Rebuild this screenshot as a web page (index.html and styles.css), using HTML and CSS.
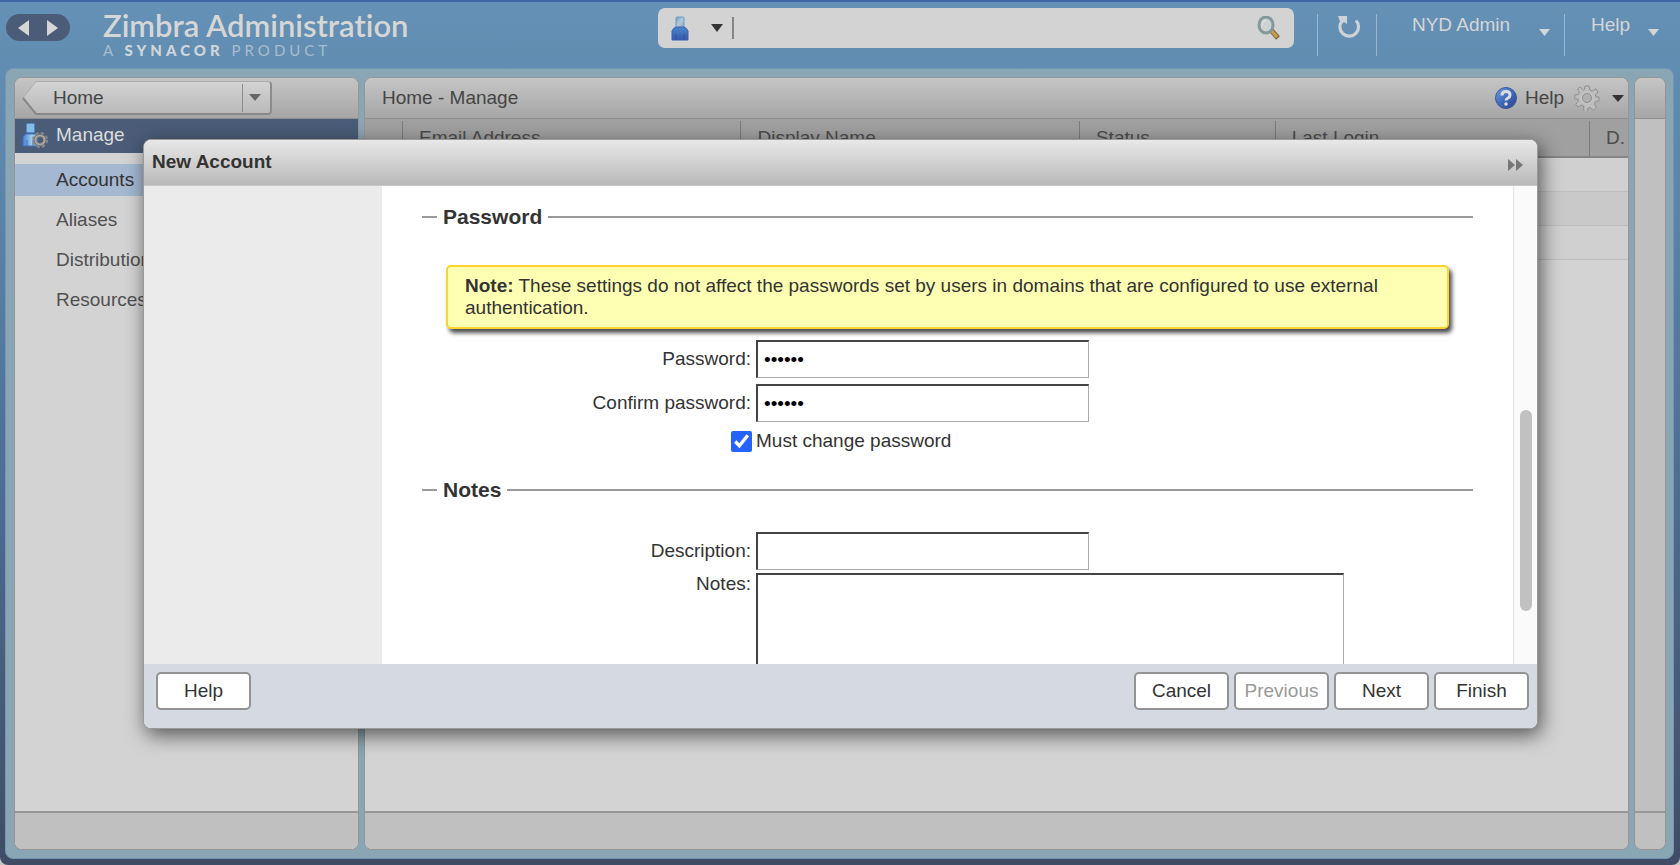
FILE: index.html
```html
<!DOCTYPE html>
<html lang="en">
<head>
<meta charset="utf-8">
<title>Zimbra Administration</title>
<link rel="stylesheet" href="styles.css">
</head>
<body>
<div class="app">
  <header class="topbar">
    <div class="history">
      <button class="bare" type="button" aria-label="Back"><svg width="11" height="16" viewBox="0 0 11 16"><path d="M11 0v16L0 8z" fill="#d6d6d6"/></svg></button>
      <button class="bare" type="button" aria-label="Forward"><svg width="11" height="16" viewBox="0 0 11 16"><path d="M0 0v16l11-8z" fill="#d6d6d6"/></svg></button>
    </div>
    <div class="brand">
      <span class="brand-name">Zimbra Administration</span>
      <span class="brand-sub">A <b>SYNACOR</b> PRODUCT</span>
    </div>
    <form class="search">
      <button class="bare search-type" type="button" aria-label="Search type">
        <svg width="18" height="25" viewBox="0 0 18 25">
          <defs>
            <linearGradient id="head" x1="0" y1="0" x2="1" y2="1"><stop offset="0" stop-color="#6f9fc8"/><stop offset=".5" stop-color="#b5c9d6"/><stop offset="1" stop-color="#7ba3c4"/></linearGradient>
            <linearGradient id="torso" x1="0" y1="0" x2="0" y2="1"><stop offset="0" stop-color="#4a86c8"/><stop offset="1" stop-color="#3858ac"/></linearGradient>
          </defs>
          <rect x="5" y="1" width="8" height="11" rx="1" fill="url(#head)" stroke="#6f9bc4"/>
          <path d="M1 24V15q1-3 4-4h8q3 1 4 4v9z" fill="url(#torso)" stroke="#3a62b0"/>
          <path d="M5 24v-6M13 24v-6" stroke="#34509c"/>
        </svg>
        <svg width="12" height="8" viewBox="0 0 12 8"><path d="M0 0h12L6 8z" fill="#333"/></svg>
      </button>
      <input class="search-input" type="text" aria-label="Search">
      <button class="bare" type="submit" aria-label="Search">
        <svg width="24" height="25" viewBox="0 0 24 25">
          <path d="M14 14l7 8" stroke="#8a6446" stroke-width="5"/>
          <path d="M14 14l6 7" stroke="#c9a04f" stroke-width="3"/>
          <ellipse cx="9" cy="9" rx="7" ry="8" fill="#cdd2d2" stroke="#829a9c" stroke-width="3"/>
          <path d="M5 10q0-5 4-6" fill="none" stroke="#e4e8e8" stroke-width="1"/>
        </svg>
      </button>
    </form>
    <div class="top-actions">
      <button class="bare refresh" type="button" aria-label="Refresh">
        <svg width="24" height="24" viewBox="0 0 24 24"><path d="M5 6A9.300 9.300 0 1 0 19 5.500" fill="none" stroke="#cdd2d6" stroke-width="3.200"/><path d="M1 1h9v8L7 7 4 9z" fill="#cdd2d6"/></svg>
      </button>
      <button class="bare user" type="button"><span>NYD Admin</span><svg width="11" height="7" viewBox="0 0 11 7"><path d="M0 0h11L5.500 7z" fill="#d6d6d6"/></svg></button>
      <button class="bare help-menu" type="button"><span>Help</span><svg width="11" height="7" viewBox="0 0 11 7"><path d="M0 0h11L5.500 7z" fill="#d6d6d6"/></svg></button>
    </div>
  </header>

  <div class="frame">
    <nav class="panel sidebar">
      <div class="panel-head">
        <div class="crumb">
          <svg class="crumb-tip" width="15" height="34" viewBox="0 0 15 34">
            <defs><linearGradient id="tip" x1="0" y1="0" x2="0" y2="1"><stop offset="0" stop-color="#d3d3d3"/><stop offset="1" stop-color="#bababa"/></linearGradient></defs>
            <path d="M15 .5h-1L1 17l13 16h1z" fill="url(#tip)"/><path d="M15 .5h-1L1 17" fill="none" stroke="#adadad"/><path d="M1 17l13 16h1" fill="none" stroke="#888" stroke-width="2"/>
          </svg>
          <div class="crumb-body">
            <button class="bare crumb-label" type="button">Home</button>
            <button class="bare crumb-menu" type="button" aria-label="History"><svg width="12" height="7" viewBox="0 0 12 7"><path d="M0 0h12L6 7z" fill="#666"/></svg></button>
          </div>
        </div>
      </div>
      <div class="section">
        <svg width="26" height="26" viewBox="0 0 26 26">
          <defs><linearGradient id="shirt" x1="0" y1="0" x2="1" y2="0"><stop offset="0" stop-color="#4a80d0"/><stop offset=".6" stop-color="#a5d2ec"/><stop offset="1" stop-color="#6fa6dc"/></linearGradient></defs>
          <rect x="4.500" y="1.500" width="8" height="9" rx="1" fill="#86bde6" stroke="#4f86d0"/>
          <path d="M1 24V15q1-2 3-3h9q2 1 3 3v9z" fill="url(#shirt)" stroke="#3e70c4"/>
          <path d="M5 24v-6M11 24v-6" stroke="#3e70c4"/>
          <circle cx="18" cy="18" r="6.500" fill="none" stroke="#8c8c8c" stroke-width="3" stroke-dasharray="2.900 2.205"/>
          <circle cx="18" cy="18" r="4.500" fill="none" stroke="#6d6d6d" stroke-width="3.800"/>
          <circle cx="18" cy="18" r="4.500" fill="none" stroke="#a6a6a6" stroke-width="2.200"/>
          <circle cx="18" cy="18" r="2.500" fill="#4a5c78"/>
        </svg>
        <span>Manage</span>
      </div>
      <div class="links">
        <a class="link active" href="#accounts">Accounts</a>
        <a class="link" href="#aliases">Aliases</a>
        <a class="link" href="#lists">Distribution Lists</a>
        <a class="link" href="#resources">Resources</a>
      </div>
      <div class="panel-foot"></div>
    </nav>

    <main class="panel content">
      <div class="panel-head">
        <span class="path">Home - Manage</span>
        <button class="bare head-help" type="button">
          <svg width="24" height="24" viewBox="0 0 24 24">
            <defs><linearGradient id="orb" x1="0" y1="0" x2="1" y2="1"><stop offset="0" stop-color="#6da0dc"/><stop offset=".5" stop-color="#3f6cba"/><stop offset="1" stop-color="#2c3e8c"/></linearGradient></defs>
            <circle cx="12" cy="12" r="10.500" fill="url(#orb)" stroke="#41569a"/>
            <path d="M8 9.500q0-4 4-4t4 3.500q0 2-2 3t-2 2.500" fill="none" stroke="#ddd" stroke-width="3"/><circle cx="12" cy="18" r="1.800" fill="#ddd"/>
          </svg>
          <span>Help</span>
        </button>
        <button class="bare head-gear" type="button" aria-label="Settings">
          <svg width="26" height="26" viewBox="0 0 26 26">
            <g fill="#bdbdbd" stroke="#8f8f8f">
              <path d="M11 1h4l1 4.200 2.200.9L22 3.900 24 7l-2.600 3 .6 2H25v4l-3.500.5-1 2.500 2 3.500-3 2.500-3.500-2.500-2 .6-1 3.500h-3L9.500 20.800l-2-.8L4 22 1.800 19.500 4.500 16l-.7-2H.8v-4l3.500-.4L5.400 7 3.500 4 6 1.800 9.500 5l1-.4z" stroke-linejoin="round"/>
              <circle cx="13" cy="13" r="4.500" fill="#b0b0b0"/>
              <circle cx="13" cy="13" r="6" fill="none" stroke="#c8c8c8"/>
            </g>
          </svg>
          <svg width="12" height="7" viewBox="0 0 12 7"><path d="M0 0h12L6 7z" fill="#333"/></svg>
        </button>
      </div>
      <table class="grid">
        <colgroup><col class="c-tick"><col class="c-mail"><col class="c-name"><col class="c-status"><col><col class="c-desc"></colgroup>
        <thead><tr><th></th><th>Email Address</th><th>Display Name</th><th>Status</th><th>Last Login</th><th>D.</th></tr></thead>
        <tbody>
          <tr><td colspan="6"></td></tr>
          <tr class="alt"><td colspan="6"></td></tr>
          <tr><td colspan="6"></td></tr>
        </tbody>
      </table>
      <div class="panel-foot"></div>
    </main>

    <aside class="panel tray">
      <div class="panel-head"></div>
      <div class="panel-foot"></div>
    </aside>
  </div>
</div>

<div class="overlay">
  <form class="dialog" role="dialog" aria-labelledby="dialog-title">
    <div class="dialog-head">
      <h1 id="dialog-title">New Account</h1>
      <button class="bare expand" type="button" aria-label="Expand"><svg width="15" height="12" viewBox="0 0 15 12"><path d="M0 0l7 6-7 6zM8 0l7 6-7 6z" fill="#777"/></svg></button>
    </div>
    <div class="dialog-body">
      <div class="steps"></div>
      <div class="pane">
        <fieldset class="group">
          <legend>Password</legend>
          <p class="note"><b>Note:</b> These settings do not affect the passwords set by users in domains that are configured to use external authentication.</p>
          <div class="fields">
            <label for="password">Password:</label>
            <input class="text" id="password" type="password" value="secret">
            <label for="confirm">Confirm password:</label>
            <input class="text" id="confirm" type="password" value="secret">
          </div>
          <div class="check">
            <input id="must-change" type="checkbox" checked>
            <label for="must-change">Must change password</label>
          </div>
        </fieldset>
        <fieldset class="group">
          <legend>Notes</legend>
          <div class="fields notes">
            <label for="description">Description:</label>
            <input class="text" id="description" type="text">
            <label class="top" for="notes">Notes:</label>
            <textarea class="text" id="notes"></textarea>
          </div>
        </fieldset>
      </div>
      <div class="scroll"><div class="thumb"></div></div>
    </div>
    <div class="dialog-foot">
      <button class="btn help" type="button">Help</button>
      <button class="btn" type="button">Cancel</button>
      <button class="btn" type="button" disabled>Previous</button>
      <button class="btn" type="button">Next</button>
      <button class="btn" type="submit">Finish</button>
    </div>
  </form>
</div>
</body>
</html>
```

FILE: styles.css
```css
* { box-sizing: border-box; }

html { background: #c4c4c4; }

body {
  margin: 0;
  font: 19px/22px "Liberation Sans", Arial, sans-serif;
  color: #333;
}

.bare {
  display: flex;
  align-items: center;
  margin: 0;
  padding: 0;
  border: 0;
  background: none;
  color: inherit;
  font: inherit;
}

svg { flex: none; display: block; }

.app {
  display: flex;
  flex-direction: column;
  min-height: 100vh;
  padding: 0 6px 6px 5px;
  border-top: 2px solid #4068a5;
  border-radius: 0 0 8px 8px;
  background: linear-gradient(#6491b5, #5a83aa 25%, #4f6e94 55%, #404c66);
}

/* Top bar */
.topbar {
  display: flex;
  align-items: flex-start;
  height: 66px;
  color: #d6d6d6;
}

.history {
  display: flex;
  align-items: center;
  justify-content: center;
  gap: 18px;
  width: 64px;
  height: 27px;
  margin: 12px 0 0 1px;
  border-radius: 14px;
  background: #4a5c78;
}

.brand {
  display: flex;
  flex-direction: column;
  flex: 1;
  padding: 7px 0 0 33px;
}

.brand-name {
  font: 600 31px/32px Lato, sans-serif;
  font-variant-ligatures: none;
}

.brand-sub {
  font: 15px/18px Lato, sans-serif;
  letter-spacing: 4px;
  color: #a9bdcc;
}

.brand-sub b { font-weight: 900; color: #d0d6da; }

.search {
  display: flex;
  align-items: center;
  width: 38.1%;
  height: 40px;
  margin-top: 6px;
  padding: 0 13px;
  border-radius: 7px;
  background: #d3d3d3;
}

.search-type { gap: 22px; padding-right: 9px; }

.search-input {
  flex: 1;
  min-width: 0;
  height: 22px;
  padding: 0 6px;
  border: 0;
  border-left: 2px solid #858585;
  outline: 0;
  background: none;
  font: inherit;
}

.top-actions {
  display: flex;
  margin: 12px 0 0 23px;
}

.top-actions .bare {
  align-items: flex-start;
  height: 42px;
  border-left: 1px solid #a2b5c6;
}

.refresh { width: 59px; padding: 1px 0 0 19px; }
.user { width: 188px; padding-left: 35px; gap: 29px; }
.help-menu { padding: 0 15px 0 26px; gap: 18px; }
.user svg, .help-menu svg { margin-top: 15px; }

/* Panels */
.frame {
  display: flex;
  flex: 1;
  gap: 5px;
  padding: 8px 7px 8px 8px;
  border: 1px solid #7296b4;
  border-radius: 8px;
  background: #8aa6b4;
}

.panel {
  display: flex;
  flex-direction: column;
  overflow: hidden;
  border: 1px solid #959595;
  border-radius: 8px;
  background: #d3d3d3;
}

.sidebar { width: 345px; }
.content { flex: 1; min-width: 0; }
.tray { width: 32px; background: #c0c0c0; }

.panel-head {
  display: flex;
  align-items: center;
  height: 41px;
  border-bottom: 1px solid #8f8f8f;
  background: linear-gradient(#c5c5c5, #a6a6a6);
  color: #454545;
}

.panel-foot {
  height: 38px;
  margin-top: auto;
  border-top: 2px solid #979797;
  background: #c0c0c0;
}

.crumb { display: flex; width: 250px; margin-left: 7px; }

.crumb-body {
  display: flex;
  flex: 1;
  align-items: center;
  height: 34px;
  border: solid #adadad;
  border-width: 1px 2px 2px 0;
  border-right-color: #8c8c8c;
  border-bottom-color: #888;
  border-radius: 0 4px 4px 0;
  background: linear-gradient(#d3d3d3, #bababa);
}

.crumb-label { flex: 1; padding-left: 16px; }

.crumb-menu {
  width: 28px;
  height: 28px;
  padding-left: 6px;
  border-left: 1px solid #8c8c8c;
}

.section {
  display: flex;
  align-items: center;
  gap: 8px;
  height: 34px;
  padding: 0 0 2px 7px;
  background: #4a5c78;
  color: #dcdcdc;
}

.links {
  display: flex;
  flex-direction: column;
  gap: 8px;
  padding-top: 11px;
}

.link {
  padding: 5px 0 5px 41px;
  color: #505050;
  text-decoration: none;
}

.link.active { background: #a4b8d2; color: #333; }

.path { flex: 1; padding-left: 17px; }
.head-help { gap: 7px; }
.head-gear { gap: 12px; padding: 0 4px 0 10px; }

.grid {
  width: 100%;
  table-layout: fixed;
  border-collapse: collapse;
}

.c-tick, .c-desc { width: 38px; }
.c-mail, .c-name { width: 26.8%; }
.c-status { width: 15.5%; }

.grid th {
  height: 38px;
  padding: 0 0 0 16px;
  overflow: hidden;
  border-bottom: 2px solid #858585;
  background: linear-gradient(#7b7b7b, #7b7b7b) right 2px / 1px 100% no-repeat #a0a0a0;
  color: #4c4c4c;
  font-weight: 400;
  text-align: left;
  white-space: nowrap;
}

.grid th:last-child { background: #a0a0a0; }

.grid td {
  height: 34px;
  padding: 0;
  border-bottom: 1px solid #bdbdbd;
  background: #d0d0d0;
}

.grid .alt td { background: #c9c9c9; }

/* Dialog */
.overlay {
  position: absolute;
  inset: 0;
  display: flex;
  padding: 139px 142px 136px 143px;
}

.dialog {
  display: flex;
  flex: 1;
  flex-direction: column;
  min-width: 0;
  overflow: hidden;
  border: 1px solid #999;
  border-radius: 8px;
  background: #fff;
  box-shadow: 3px 6px 20px rgba(0, 0, 0, .6);
}

.dialog-head {
  display: flex;
  align-items: center;
  justify-content: space-between;
  height: 46px;
  padding: 0 14px 2px 8px;
  border-bottom: 1px solid #c8c8c8;
  background: linear-gradient(#e8e8e8, #b9b9b9);
}

.dialog-head h1 { margin: 0; font-size: 19px; line-height: 22px; }
.dialog-head .expand { padding-top: 6px; }

.dialog-body { display: flex; flex: 1; min-height: 0; }

.steps { width: 238px; background: #ebebeb; }

.pane {
  flex: 1;
  min-width: 0;
  overflow: hidden;
  padding: 19px 40px 0;
}

.group {
  margin: 0;
  padding: 0;
  border: 0;
  border-top: 2px solid #999;
}

.group + .group { margin-top: 26px; }

.group legend {
  margin-left: 15px;
  padding: 0 6px;
  font-size: 21px;
  line-height: 24px;
  font-weight: 700;
}

.note {
  margin: 36px 24px 11px;
  padding: 8px 17px;
  border: 2px solid #fbd42f;
  border-radius: 5px;
  background: #feffb3;
  box-shadow: 3px 4px 4px rgba(0, 0, 0, .7);
}

.fields {
  display: grid;
  grid-template-columns: 329px 1fr;
  align-items: center;
  gap: 6px 5px;
}

.fields label { text-align: right; }
.fields .top { align-self: start; }
.notes { margin-top: 30px; row-gap: 3px; }

.text {
  width: 333px;
  height: 38px;
  padding: 0 6px;
  border: 1px solid #aaa;
  border-top: 2px solid #444;
  border-left: 2px solid #444;
  outline: 0;
  background: #fff;
  color: #000;
  font: inherit;
}

textarea.text { width: 588px; height: 130px; resize: none; }

.check {
  display: flex;
  align-items: center;
  gap: 4px;
  margin: 8px 0 0 309px;
}

.check input {
  width: 21px;
  height: 21px;
  margin: 0;
  accent-color: #2563ff;
}

.scroll {
  width: 24px;
  padding: 224px 5px 0 6px;
  border-left: 1px solid #e6e6e6;
  background: #fafafa;
}

.thumb { height: 201px; border-radius: 6px; background: #c1c1c1; }

.dialog-foot {
  display: flex;
  gap: 5px;
  height: 64px;
  padding: 8px 8px 0 12px;
  background: #d5d9e1;
}

.btn {
  width: 95px;
  height: 38px;
  padding: 0;
  border: 2px solid #939393;
  border-radius: 5px;
  background: #fff;
  color: #333;
  font: inherit;
}

.btn.help { margin-right: auto; }
.btn:disabled { color: #999; }
```
